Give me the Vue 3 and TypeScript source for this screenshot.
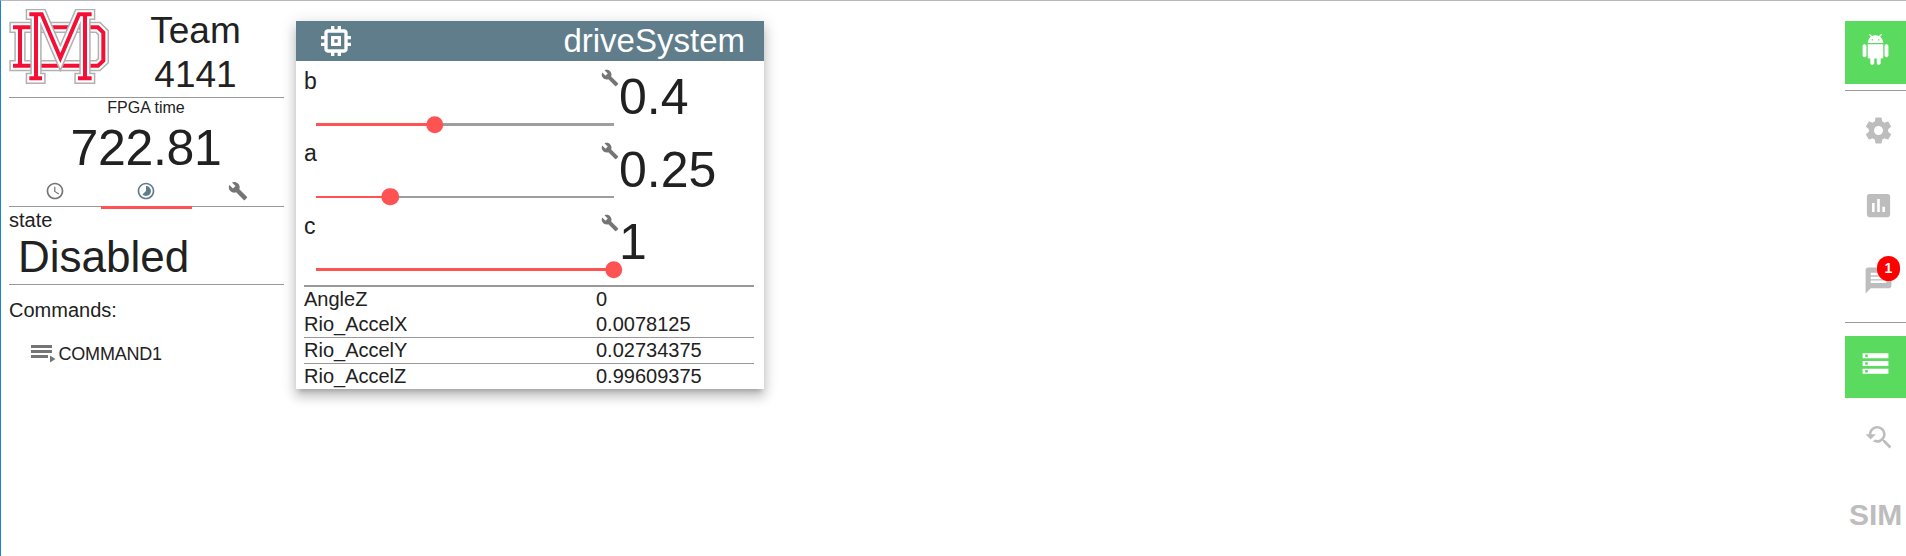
<script setup lang="ts">
interface Tunable {
  name: string
  value: number
}

interface Reading {
  name: string
  value: string
  ruled: boolean
}

const wrench =
  'M22.7 19l-9.1-9.1c.9-2.3.4-5-1.5-6.9-2-2-5-2.4-7.4-1.3L9 6 6 9 1.6 4.7C.4 7.1.9 10.1 2.9 12.1c1.9 1.9 4.6 2.4 6.9 1.5l9.1 9.1c.4.4 1 .4 1.4 0l2.3-2.3c.5-.4.5-1.1.1-1.4z'

const timeTabs: { id: string; path: string; active: boolean }[] = [
  {
    id: 'clock',
    active: false,
    path: 'M11.99 2C6.47 2 2 6.48 2 12s4.47 10 9.99 10C17.52 22 22 17.52 22 12S17.52 2 11.99 2zM12 20c-4.42 0-8-3.58-8-8s3.58-8 8-8 8 3.58 8 8-3.58 8-8 8zm.5-13H11v6l5.25 3.15.75-1.23-4.5-2.67z',
  },
  {
    id: 'timelapse',
    active: true,
    path: 'M16.24 7.76C15.07 6.59 13.54 6 12 6v6l-4.24 4.24c2.34 2.34 6.14 2.34 8.49 0 2.34-2.34 2.34-6.14-.01-8.48zM12 2C6.48 2 2 6.48 2 12s4.48 10 10 10 10-4.48 10-10S17.52 2 12 2zm0 18c-4.42 0-8-3.58-8-8s3.58-8 8-8 8 3.58 8 8-3.58 8-8 8z',
  },
  { id: 'build', active: false, path: wrench },
]

const tunables: Tunable[] = [
  { name: 'b', value: 0.4 },
  { name: 'a', value: 0.25 },
  { name: 'c', value: 1 },
]

const readings: Reading[] = [
  { name: 'AngleZ', value: '0', ruled: false },
  { name: 'Rio_AccelX', value: '0.0078125', ruled: false },
  { name: 'Rio_AccelY', value: '0.02734375', ruled: true },
  { name: 'Rio_AccelZ', value: '0.99609375', ruled: true },
]

const percent = (value: number): string => `${value * 100}%`
</script>

<template>
  <div class="dashboard">
    <aside class="sidebar">
      <header class="team">
        <svg class="logo" viewBox="0 0 300 225">
          <g transform="translate(-27 -27)" fill="none" stroke-linecap="square" stroke-miterlimit="8">
            <g v-for="layer in ['edge', 'gap', 'core']" :key="'d' + layer" :class="layer">
              <path d="M45 82H294L310 98V182L294 197H45M60 82V197" />
            </g>
            <g v-for="layer in ['edge', 'gap', 'core']" :key="'m' + layer" :class="layer">
              <path d="M94 43H125L181 174L237 43H269M108 43V235M94 235H120M255 43V235M240 235H269" />
            </g>
          </g>
        </svg>
        <div class="team-name">Team<br />4141</div>
      </header>

      <section class="fpga">
        <div class="fpga-label">FPGA time</div>
        <div class="fpga-value">722.81</div>
        <nav class="tabs">
          <span v-for="tab in timeTabs" :key="tab.id" class="tab" :class="{ active: tab.active }">
            <svg viewBox="0 0 24 24"><path :d="tab.path" /></svg>
          </span>
        </nav>
      </section>

      <section class="state">
        <div class="state-label">state</div>
        <div class="state-value">Disabled</div>
      </section>

      <div class="commands-label">Commands:</div>
      <div class="command">
        <svg viewBox="0 0 25 18">
          <path d="M0 0h21v3H0zM0 5h21v3H0zM0 10h17v3H0zM19 10.5v7l5.5-3.5z" />
        </svg>
        <span>COMMAND1</span>
      </div>
    </aside>

    <main class="card">
      <header class="card-head">
        <svg viewBox="0 0 24 24">
          <path
            d="M15 9H9v6h6V9zm-2 4h-2v-2h2v2zm8-2V9h-2V7c0-1.1-.9-2-2-2h-2V3h-2v2h-2V3H9v2H7c-1.1 0-2 .9-2 2v2H3v2h2v2H3v2h2v2c0 1.1.9 2 2 2h2v2h2v-2h2v2h2v-2h2c1.1 0 2-.9 2-2v-2h2v-2h-2v-2h2zm-4 6H7V7h10v10z"
          />
        </svg>
        <h1>driveSystem</h1>
      </header>

      <div class="tunables">
        <div v-for="item in tunables" :key="item.name" class="tunable">
          <div class="control">
            <div class="control-name">{{ item.name }}</div>
            <div class="track">
              <div class="fill" :style="{ width: percent(item.value) }"></div>
              <div class="thumb" :style="{ left: percent(item.value) }"></div>
            </div>
          </div>
          <svg class="wrench" viewBox="0 0 24 24"><path :d="wrench" /></svg>
          <div class="control-value">{{ item.value }}</div>
        </div>
      </div>

      <div class="readings">
        <div v-for="row in readings" :key="row.name" class="reading" :class="{ ruled: row.ruled }">
          <span>{{ row.name }}</span>
          <span>{{ row.value }}</span>
        </div>
      </div>
    </main>

    <aside class="rail">
      <div class="status android">
        <svg viewBox="0 0 24 24">
          <path
            d="M6 18c0 .55.45 1 1 1h1v3.5c0 .83.67 1.5 1.5 1.5s1.5-.67 1.5-1.5V19h2v3.5c0 .83.67 1.5 1.5 1.5s1.5-.67 1.5-1.5V19h1c.55 0 1-.45 1-1V8H6v10zM3.5 8C2.67 8 2 8.67 2 9.5v7c0 .83.67 1.5 1.5 1.5S5 17.33 5 16.5v-7C5 8.67 4.33 8 3.5 8zm17 0c-.83 0-1.5.67-1.5 1.5v7c0 .83.67 1.5 1.5 1.5s1.5-.67 1.5-1.5v-7c0-.83-.67-1.5-1.5-1.5zm-4.97-5.84l1.3-1.3c.2-.2.2-.51 0-.71-.2-.2-.51-.2-.71 0l-1.48 1.48C13.85 1.23 12.95 1 12 1c-.96 0-1.86.23-2.66.63L7.85.15c-.2-.2-.51-.2-.71 0-.2.2-.2.51 0 .71l1.31 1.31C6.97 3.26 6 5.01 6 7h12c0-1.99-.97-3.75-2.47-4.84zM10 5H9V4h1v1zm5 0h-1V4h1v1z"
          />
        </svg>
      </div>

      <div class="links">
        <div class="link">
          <svg viewBox="0 0 24 24">
            <path
              d="M19.43 12.98c.04-.32.07-.64.07-.98s-.03-.66-.07-.98l2.11-1.65c.19-.15.24-.42.12-.64l-2-3.46c-.12-.22-.39-.3-.61-.22l-2.49 1c-.52-.4-1.08-.73-1.69-.98l-.38-2.65C14.46 2.18 14.25 2 14 2h-4c-.25 0-.46.18-.49.42l-.38 2.65c-.61.25-1.17.59-1.69.98l-2.49-1c-.23-.09-.49 0-.61.22l-2 3.46c-.13.22-.07.49.12.64l2.11 1.65c-.04.32-.07.65-.07.98s.03.66.07.98l-2.11 1.65c-.19.15-.24.42-.12.64l2 3.46c.12.22.39.3.61.22l2.49-1c.52.4 1.08.73 1.69.98l.38 2.65c.03.24.24.42.49.42h4c.25 0 .46-.18.49-.42l.38-2.65c.61-.25 1.17-.59 1.69-.98l2.49 1c.23.09.49 0 .61-.22l2-3.46c.12-.22.07-.49-.12-.64l-2.11-1.65zM12 15.5c-1.93 0-3.5-1.57-3.5-3.5s1.57-3.5 3.5-3.5 3.5 1.57 3.5 3.5-1.57 3.5-3.5 3.5z"
            />
          </svg>
        </div>
        <div class="link">
          <svg viewBox="0 0 24 24">
            <path
              d="M19 3H5c-1.1 0-2 .9-2 2v14c0 1.1.9 2 2 2h14c1.1 0 2-.9 2-2V5c0-1.1-.9-2-2-2zM9 17H7v-7h2v7zm4 0h-2V7h2v10zm4 0h-2v-4h2v4z"
            />
          </svg>
        </div>
        <div class="link">
          <svg viewBox="0 0 24 24">
            <path
              d="M20 2H4c-1.1 0-1.99.9-1.99 2L2 22l4-4h14c1.1 0 2-.9 2-2V4c0-1.1-.9-2-2-2zM6 9h12v2H6V9zm12 5H6v-2h12v2zm0-6H6V6h12v2z"
            />
          </svg>
          <span class="badge">1</span>
        </div>
      </div>

      <div class="status server">
        <svg viewBox="0 0 24 24">
          <path d="M2 20h20v-4H2v4zm2-3h2v2H4v-2zM2 4v4h20V4H2zm4 3H4V5h2v2zm-4 7h20v-4H2v4zm2-3h2v2H4v-2z" />
        </svg>
      </div>
      <div class="link replay">
        <svg viewBox="0 0 24 24">
          <path
            d="M17.01 14h-.8l-.27-.27c.98-1.14 1.57-2.61 1.57-4.23 0-3.59-2.91-6.5-6.5-6.5s-6.5 3-6.5 6.5H2l3.84 4 4.16-4H6.51C6.51 7 8.53 5 11.01 5s4.5 2.01 4.5 4.5c0 2.48-2.02 4.5-4.5 4.5-.65 0-1.26-.14-1.82-.38L7.71 15.1c.97.57 2.09.9 3.3.9 1.61 0 3.08-.59 4.22-1.57l.27.27v.79l5.01 4.99L22 19l-4.99-5z"
          />
        </svg>
      </div>
      <div class="sim">SIM</div>
    </aside>
  </div>
</template>

<style>
body {
  margin: 0;
  background: #fff;
}
</style>

<style scoped>
.dashboard {
  box-sizing: border-box;
  display: flex;
  width: 100%;
  height: 556px;
  overflow: hidden;
  border-top: 1px solid #b9b9b9;
  border-left: 1px solid #1883d7;
  background: #fff;
  color: #212121;
  font-family: 'Liberation Sans', Arial, sans-serif;
}

svg {
  display: block;
  flex: none;
  fill: currentColor;
}

.sidebar {
  flex: none;
  width: 275px;
  margin-left: 8px;
}

.team {
  display: flex;
  height: 96px;
  border-bottom: 1px solid #999;
}

.logo {
  width: 100px;
  height: 75px;
  margin-top: 8px;
}

.edge {
  stroke: #b0b0b0;
  stroke-width: 34px;
}

.gap {
  stroke: #fff;
  stroke-width: 25px;
}

.core {
  stroke: #f50f37;
  stroke-width: 12px;
}

.team-name {
  flex: 1;
  padding-top: 8px;
  margin-left: -2px;
  font-size: 37px;
  line-height: 44px;
  text-align: center;
}

.fpga {
  height: 108px;
  border-bottom: 1px solid #999;
  text-align: center;
}

.fpga-label {
  height: 18px;
  padding-right: 1px;
  font-size: 16px;
  line-height: 19px;
}

.fpga-value {
  height: 62px;
  padding-right: 1px;
  font-size: 50px;
  letter-spacing: -0.3px;
  line-height: 64px;
}

.tabs {
  display: grid;
  grid-template-columns: repeat(3, 1fr);
  height: 31px;
}

.tab {
  display: flex;
  justify-content: center;
  padding-top: 3px;
  border-bottom: 3px solid transparent;
  color: #757575;
}

.tab svg {
  width: 20px;
  height: 20px;
}

.tab.active {
  border-color: #ff5252;
  color: #607d8b;
}

.state {
  height: 77px;
  border-bottom: 1px solid #999;
}

.state-label {
  height: 27px;
  font-size: 20px;
  line-height: 26px;
}

.state-value {
  padding-left: 9px;
  font-size: 44px;
  line-height: 46px;
}

.commands-label {
  margin-top: 13px;
  font-size: 20px;
  line-height: 24px;
}

.command {
  display: flex;
  align-items: flex-start;
  gap: 2.5px;
  margin-top: 20px;
  padding-left: 22px;
  font-size: 18px;
  letter-spacing: -0.2px;
  line-height: 24px;
}

.command svg {
  width: 25px;
  height: 18px;
  margin-top: 3px;
  color: #757575;
}

.card {
  flex: none;
  width: 468px;
  height: 368px;
  margin: 20px 0 0 12px;
  background: #fff;
  box-shadow:
    0 5px 5px -3px rgba(0, 0, 0, 0.2),
    0 8px 10px 1px rgba(0, 0, 0, 0.14),
    0 3px 14px 2px rgba(0, 0, 0, 0.12);
}

.card-head {
  display: flex;
  align-items: center;
  justify-content: space-between;
  height: 40px;
  padding: 0 19px 0 20px;
  background: #607d8b;
  color: #fff;
}

.card-head svg {
  width: 40px;
  height: 40px;
}

.card-head h1 {
  margin: 0;
  font-size: 33px;
  font-weight: 400;
  line-height: 40px;
}

.tunables {
  height: 224px;
  margin: 0 10px 0 8px;
}

.tunable {
  display: flex;
  height: 72.5px;
}

.control {
  width: 297px;
}

.control-name {
  height: 62px;
  font-size: 23px;
  line-height: 40px;
}

.tunable:nth-child(2) .control-name {
  line-height: 39px;
}

.track {
  position: relative;
  width: 298px;
  height: 3px;
  margin-left: 12px;
  background: #9e9e9e;
}

.tunable:nth-child(2) .track {
  height: 2px;
}

.fill {
  height: 100%;
  background: #ff5252;
}

.thumb {
  position: absolute;
  top: 50%;
  width: 17.5px;
  height: 17.5px;
  margin-left: -0.5px;
  border-radius: 50%;
  background: #ff5252;
  transform: translate(-50%, -50%);
}

.wrench {
  width: 18px;
  height: 18px;
  margin-top: 8px;
  color: #757575;
}

.control-value {
  font-size: 50px;
  line-height: 72px;
}

.readings {
  margin: 0 10px 0 8px;
  border-top: 2px solid #999;
}

.reading {
  display: grid;
  grid-template-columns: 292px 1fr;
  height: 25px;
  font-size: 20px;
  line-height: 25px;
}

.reading.ruled {
  border-top: 1px solid #999;
}

.rail {
  flex: none;
  width: 61px;
  margin: 20px 0 0 auto;
}

.status {
  display: flex;
  justify-content: center;
  background: #5adb5f;
  color: #fff;
}

.status svg {
  width: 31px;
  height: 31px;
}

.android {
  height: 63px;
}

.android svg {
  margin-top: 13px;
}

.server {
  height: 62px;
  margin-top: 13px;
}

.server svg {
  margin-top: 11.5px;
}

.links {
  display: grid;
  grid-template-rows: repeat(3, 75px);
  box-sizing: border-box;
  height: 233px;
  margin-top: 6px;
  padding-top: 24px;
  border-top: 1px solid #999;
  border-bottom: 1px solid #999;
}

.link {
  position: relative;
  padding-left: 18px;
  color: #bdbdbd;
}

.link svg {
  width: 31px;
  height: 31px;
}

.badge {
  position: absolute;
  top: -9px;
  left: 32px;
  width: 23px;
  height: 25px;
  border-radius: 12px;
  background: #f00;
  color: #fff;
  font-size: 14px;
  font-weight: 700;
  line-height: 25px;
  text-align: center;
}

.replay {
  margin-top: 24px;
}

.sim {
  margin: 44px 0 0 4px;
  color: #bdbdbd;
  font-size: 30px;
  font-weight: 700;
  line-height: 35px;
}
</style>
